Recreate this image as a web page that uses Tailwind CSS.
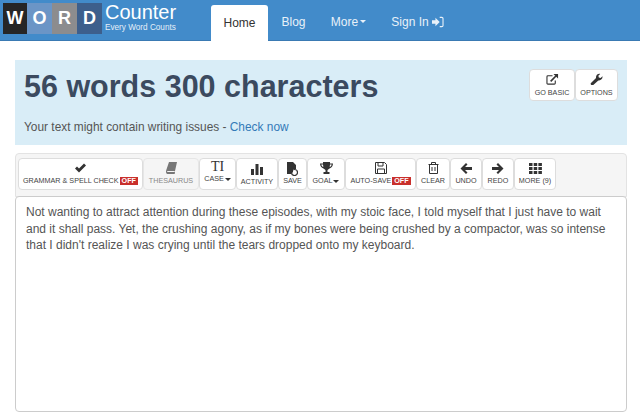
<!DOCTYPE html>
<html lang="en">
<head>
  <meta charset="UTF-8" />
  <title>WordCounter</title>
  <script src="https://cdn.jsdelivr.net/npm/@tailwindcss/browser@4"></script>
</head>
<body class="bg-white h-[412px] w-[640px] overflow-hidden font-['Liberation_Sans',sans-serif] text-[#555]">
  <!-- navbar -->
  <header class="h-[41px] bg-[#428bca] border-b border-[#3a7ab3] flex">
    <div class="w-[211px] flex pl-[3px] pt-[3px]">
      <div class="flex h-[31px] text-white font-bold text-[18px] leading-[31px] text-center">
        <span class="w-[24px] bg-[#262626]">W</span>
        <span class="w-[25px] bg-[#6b95c6]">O</span>
        <span class="w-[25px] bg-[#8c8c8e]">R</span>
        <span class="w-[25px] bg-[#3d5f8c]">D</span>
      </div>
      <div class="ml-[3px] text-white">
        <div class="text-[20px] leading-[19px]">Counter</div>
        <div class="text-[8.200px] leading-[9px] mt-[1px] text-[#e4eef8] whitespace-nowrap">Every Word Counts</div>
      </div>
    </div>
    <nav class="flex text-[12px] text-[#e8f1f9]">
      <a class="mt-[5px] w-[57px] h-[36px] bg-white rounded-t-[3px] text-[#333] flex items-center justify-center">Home</a>
      <a class="w-[51px] pt-[3px] flex items-center justify-center">Blog</a>
      <a class="w-[59px] pt-[3px] flex items-center justify-center gap-[2px]">More<span class="border-x-[3.500px] border-x-transparent border-t-[3.500px] border-t-[#e8f1f9]"></span></a>
      <a class="w-[79px] pt-[3px] flex items-center justify-center gap-[3px]">Sign In
        <svg width="12" height="12" viewBox="0 0 14 14" fill="#e8f1f9"><path d="M0 5h4V2l5 5-5 5V9H0z"/><path d="M9 1h2.500A2 2 0 0 1 13.500 3v8a2 2 0 0 1-2 2H9v-1.300h2.500a.8.800 0 0 0 .7-.7V3a.8.800 0 0 0-.7-.7H9z"/></svg>
      </a>
    </nav>
  </header>

  <main class="pl-[15px] pr-[13px]">
    <!-- counts -->
    <section class="mt-[19px] h-[85px] bg-[#d9edf7] flex justify-between pl-[9px] pr-[9px]">
      <div>
        <h1 class="text-[30.500px] leading-[36px] font-bold text-[#3b4a5f] mt-[8px] whitespace-nowrap">56 words 300 characters</h1>
        <p class="text-[11.900px] leading-[18px] mt-[14px] text-[#555]">Your text might contain writing issues - <a class="text-[#337ab7]">Check now</a></p>
      </div>
      <div class="flex mt-[9px] h-[32px] text-[7.200px] text-[#444]">
        <button class="w-[46px] bg-white border border-[#ddd] rounded-[4px] flex flex-col items-center pt-[3px]">
          <svg width="13" height="12" viewBox="0 0 14 13" fill="none" stroke="#333"><path d="M10 8v3a1 1 0 0 1-1 1H2a1 1 0 0 1-1-1V4a1 1 0 0 1 1-1h5" stroke-width="1.200"/><path d="M5 9l6-6" stroke-width="1.800"/><path d="M8 1h5v5z" fill="#333" stroke="none"/></svg>
          <span class="mt-[3px] leading-[10px] whitespace-nowrap">GO BASIC</span>
        </button>
        <button class="w-[43px] bg-white border border-[#ddd] rounded-[4px] flex flex-col items-center pt-[3px]">
          <svg width="13" height="12" viewBox="0 0 13 13" fill="#333"><path d="M.8 10.500 6 5.500C5.500 3 7.500.500 10.500 1L8.500 3l.5 2 2 .5 2-2c.400 3-2 5-4.500 4.500L3 13a1.500 1.500 0 0 1-2.200-2.500z"/></svg>
          <span class="mt-[3px] leading-[10px]">OPTIONS</span>
        </button>
      </div>
    </section>

    <!-- toolbar -->
    <section class="mt-[8px] h-[44px] bg-[#f5f5f5] border border-[#e3e3e3] rounded-t-[4px] flex pl-[2px] pt-[4px] text-[7.200px] text-[#444] whitespace-nowrap">
      <button class="w-[125px] h-[32px] bg-white border border-[#ddd] rounded-[4px] flex flex-col items-center pt-[3px]">
        <svg width="13" height="12" viewBox="0 0 13 12" fill="#333"><path d="M1 6.500 3 4.500 5 6.500 10 1.500 12 3.500 5 10.500z"/></svg>
        <span class="mt-[2px] leading-[10px] flex items-center gap-[1px]">GRAMMAR &amp; SPELL CHECK <b class="bg-[#c9302c] text-white px-[2px] leading-[8px] font-bold">OFF</b></span>
      </button>
      <button class="w-[56px] h-[32px] bg-[#f5f5f5] border border-[#e6e6e6] rounded-[4px] flex flex-col items-center pt-[3px] text-[#888]">
        <svg width="11" height="12" viewBox="0 0 11 12" fill="#777"><path d="M3 0h8L9 9H1.500C1 9 .8 10 1.500 10H8.500l.3-1L9 10l-.3 2H1.500C0 12-.3 10 .3 8z"/></svg>
        <span class="mt-[2px] leading-[10px]">THESAURUS</span>
      </button>
      <button class="w-[37px] h-[32px] bg-white border border-[#ddd] rounded-[4px] flex flex-col items-center pt-[1px]">
        <span class="text-[14px] leading-[14px] text-[#333] font-['Liberation_Serif',serif]">TI</span>
        <span class="leading-[10px] flex items-center gap-[1px]">CASE<span class="border-x-[3px] border-x-transparent border-t-[3px] border-t-[#333]"></span></span>
      </button>
      <button class="w-[42px] h-[32px] bg-white border border-[#ddd] rounded-[4px] flex flex-col items-center pt-[4px]">
        <svg width="12" height="12" viewBox="0 0 12 12" fill="#333"><path d="M0 6h3v6H0zM4.500 1h3v11h-3zM9 4h3v8H9z"/></svg>
        <span class="mt-[2px] leading-[10px]">ACTIVITY</span>
      </button>
      <button class="w-[29px] h-[32px] bg-white border border-[#ddd] rounded-[4px] flex flex-col items-center pt-[3px]">
        <svg width="11" height="14" viewBox="0 0 11 14" fill="#333"><path d="M0 0h6l3 3v4H6v3l-2 2H0z"/><circle cx="7.500" cy="10.500" r="3" fill="none" stroke="#333" stroke-width="1.200"/></svg>
        <span class="leading-[10px]">SAVE</span>
      </button>
      <button class="w-[38px] h-[32px] bg-white border border-[#ddd] rounded-[4px] flex flex-col items-center pt-[3px]">
        <svg width="13" height="12" viewBox="0 0 13 12" fill="#333"><path d="M3 0h7v1.500h3C13 4 11.500 6 9.500 6.500L7.500 8v2H9.500v2h-6v-2h2V8L3.500 6.500C1.500 6 0 4 0 1.500h3zM1.300 2.500C1.500 3.800 2.300 4.700 3.300 5L3 2.500zM11.700 2.500H10L9.700 5c1-.3 1.800-1.200 2-2.500z"/></svg>
        <span class="mt-[2px] leading-[10px] flex items-center gap-[1px]">GOAL<span class="border-x-[3px] border-x-transparent border-t-[3px] border-t-[#333]"></span></span>
      </button>
      <button class="w-[71px] h-[32px] bg-white border border-[#ddd] rounded-[4px] flex flex-col items-center pt-[3px]">
        <svg width="12" height="12" viewBox="0 0 12 12" fill="none" stroke="#333"><path d="M.5.500h9l2 2v9H.5z"/><path d="M3 .5v3.500h5V.5M2.500 11.500V7h7v4.500"/></svg>
        <span class="mt-[2px] leading-[10px] flex items-center gap-[1px]">AUTO-SAVE <b class="bg-[#c9302c] text-white px-[2px] leading-[8px] font-bold">OFF</b></span>
      </button>
      <button class="w-[34px] h-[32px] bg-white border border-[#ddd] rounded-[4px] flex flex-col items-center pt-[3px]">
        <svg width="11" height="12" viewBox="0 0 11 12" fill="none" stroke="#333"><path d="M.5 2.500h10M3.500 2.500V.5h4v2M1.500 2.500v9h8v-9M4 5v4M7 5v4"/></svg>
        <span class="mt-[2px] leading-[10px]">CLEAR</span>
      </button>
      <button class="w-[32px] h-[32px] bg-white border border-[#ddd] rounded-[4px] flex flex-col items-center pt-[4px]">
        <svg width="12" height="11" viewBox="0 0 12 11" fill="#333"><path d="M6 0 7.500 1.500 5 4h7v3H5l2.500 2.500L6 11 .5 5.500z"/></svg>
        <span class="mt-[2px] leading-[10px]">UNDO</span>
      </button>
      <button class="w-[32px] h-[32px] bg-white border border-[#ddd] rounded-[4px] flex flex-col items-center pt-[4px]">
        <svg width="12" height="11" viewBox="0 0 12 11" fill="#333"><path d="M6 0 4.500 1.500 7 4H0v3h7L4.500 9.500 6 11l5.500-5.500z"/></svg>
        <span class="mt-[2px] leading-[10px]">REDO</span>
      </button>
      <button class="w-[42px] h-[32px] bg-white border border-[#ddd] rounded-[4px] flex flex-col items-center pt-[4px]">
        <svg width="13" height="11" viewBox="0 0 13 11" fill="#333"><path d="M0 0h3.500v3H0zM4.700 0h3.500v3H4.700zM9.400 0h3.500v3H9.400zM0 4h3.500v3H0zM4.700 4h3.500v3H4.700zM9.400 4h3.500v3H9.400zM0 8h3.500v3H0zM4.700 8h3.500v3H4.700zM9.400 8h3.500v3H9.400z"/></svg>
        <span class="mt-[2px] leading-[10px]">MORE (9)</span>
      </button>
    </section>

    <!-- editor -->
    <section class="h-[216px] border border-[#ccc] rounded-[4px] px-[10px] pt-[7px] text-[12px] leading-[16.500px] text-[#555] -mt-[1px] bg-white">
      Not wanting to attract attention during these episodes, with my stoic face, I told myself that I just have to wait and it shall pass. Yet, the crushing agony, as if my bones were being crushed by a compactor, was so intense that I didn't realize I was crying until the tears dropped onto my keyboard.
    </section>
  </main>
</body>
</html>
